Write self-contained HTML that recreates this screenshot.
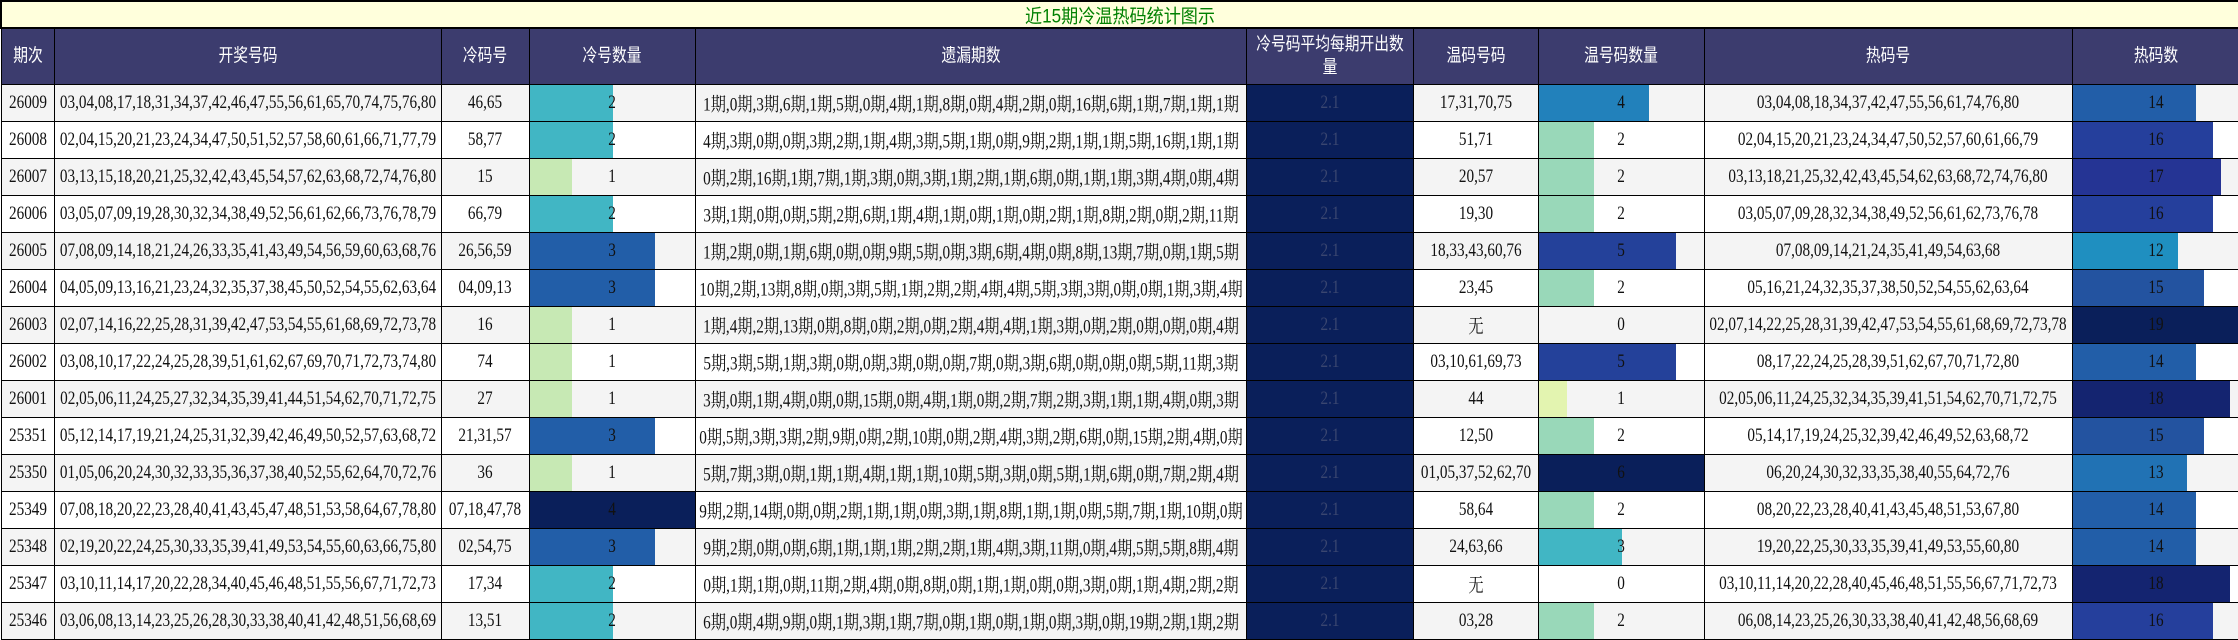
<!DOCTYPE html>
<html><head><meta charset="utf-8"><style>
*{margin:0;padding:0;box-sizing:border-box}
body{width:2238px;height:639px;overflow:hidden;background:#fff;font-family:"Liberation Serif","Noto Serif CJK SC","Noto Sans CJK SC",serif}
table{border-collapse:collapse;table-layout:fixed;width:2238px}
td{border:1px solid #000;position:relative;overflow:hidden;padding:0}
.t{position:absolute;left:50%;top:50%;transform:translate(-50%,-50%) scaleX(.8);white-space:nowrap;font-size:19px;color:#111;z-index:2}
.ttl td{height:27px;background:#ffffdc;border:2px solid #000}
.ttl .t{color:#008000;transform:translate(-50%,-50%) scaleX(.9);font-size:19px;font-family:"Liberation Sans","Noto Sans CJK SC",sans-serif}
.hd td{height:56px;background:#3c3c6e}
.hd .t{color:#fff;font-family:"Liberation Sans","Noto Sans CJK SC",sans-serif;font-size:18px;transform:translate(-50%,-50%) scaleX(.82);text-align:center;line-height:23px}
.r td{height:37px;background:#fff}
.r.o td{background:#f4f4f4}
.b{position:absolute;left:0;top:0;bottom:0;z-index:1}
.r td.av{background:#0a1f5a}
.av .t{color:#3a4670}
</style></head><body>
<table>
<colgroup><col style="width:53px"><col style="width:387px"><col style="width:88px"><col style="width:166px"><col style="width:551px"><col style="width:167px"><col style="width:125px"><col style="width:166px"><col style="width:368px"><col style="width:167px"></colgroup>
<tr class="ttl"><td colspan="10"><span class="t">近15期冷温热码统计图示</span></td></tr>
<tr class="hd"><td><span class="t">期次</span></td><td><span class="t">开奖号码</span></td><td><span class="t">冷码号</span></td><td><span class="t">冷号数量</span></td><td><span class="t">遗漏期数</span></td><td><span class="t">冷号码平均每期开出数<br>量</span></td><td><span class="t">温码号码</span></td><td><span class="t">温号码数量</span></td><td><span class="t">热码号</span></td><td><span class="t">热码数</span></td></tr>

<tr class="r o"><td><span class="t">26009</span></td><td><span class="t">03,04,08,17,18,31,34,37,42,46,47,55,56,61,65,70,74,75,76,80</span></td><td><span class="t">46,65</span></td><td><div class="b" style="width:83px;background:#41b6c4"></div><span class="t">2</span></td><td><span class="t">1期,0期,3期,6期,1期,5期,0期,4期,1期,8期,0期,4期,2期,0期,16期,6期,1期,7期,1期,1期</span></td><td class="av"><span class="t">2.1</span></td><td><span class="t">17,31,70,75</span></td><td><div class="b" style="width:110px;background:#2281bb"></div><span class="t">4</span></td><td><span class="t">03,04,08,18,34,37,42,47,55,56,61,74,76,80</span></td><td><div class="b" style="width:123px;background:#225ea8"></div><span class="t">14</span></td></tr>

<tr class="r"><td><span class="t">26008</span></td><td><span class="t">02,04,15,20,21,23,24,34,47,50,51,52,57,58,60,61,66,71,77,79</span></td><td><span class="t">58,77</span></td><td><div class="b" style="width:83px;background:#41b6c4"></div><span class="t">2</span></td><td><span class="t">4期,3期,0期,0期,3期,2期,1期,4期,3期,5期,1期,0期,9期,2期,1期,1期,5期,16期,1期,1期</span></td><td class="av"><span class="t">2.1</span></td><td><span class="t">51,71</span></td><td><div class="b" style="width:55px;background:#99d8b9"></div><span class="t">2</span></td><td><span class="t">02,04,15,20,21,23,24,34,47,50,52,57,60,61,66,79</span></td><td><div class="b" style="width:140px;background:#253f9c"></div><span class="t">16</span></td></tr>

<tr class="r o"><td><span class="t">26007</span></td><td><span class="t">03,13,15,18,20,21,25,32,42,43,45,54,57,62,63,68,72,74,76,80</span></td><td><span class="t">15</span></td><td><div class="b" style="width:42px;background:#c7e9b4"></div><span class="t">1</span></td><td><span class="t">0期,2期,16期,1期,7期,1期,3期,0期,3期,1期,2期,1期,6期,0期,1期,1期,3期,4期,0期,4期</span></td><td class="av"><span class="t">2.1</span></td><td><span class="t">20,57</span></td><td><div class="b" style="width:55px;background:#99d8b9"></div><span class="t">2</span></td><td><span class="t">03,13,18,21,25,32,42,43,45,54,62,63,68,72,74,76,80</span></td><td><div class="b" style="width:148px;background:#253494"></div><span class="t">17</span></td></tr>

<tr class="r"><td><span class="t">26006</span></td><td><span class="t">03,05,07,09,19,28,30,32,34,38,49,52,56,61,62,66,73,76,78,79</span></td><td><span class="t">66,79</span></td><td><div class="b" style="width:83px;background:#41b6c4"></div><span class="t">2</span></td><td><span class="t">3期,1期,0期,0期,5期,2期,6期,1期,4期,1期,0期,1期,0期,2期,1期,8期,2期,0期,2期,11期</span></td><td class="av"><span class="t">2.1</span></td><td><span class="t">19,30</span></td><td><div class="b" style="width:55px;background:#99d8b9"></div><span class="t">2</span></td><td><span class="t">03,05,07,09,28,32,34,38,49,52,56,61,62,73,76,78</span></td><td><div class="b" style="width:140px;background:#253f9c"></div><span class="t">16</span></td></tr>

<tr class="r o"><td><span class="t">26005</span></td><td><span class="t">07,08,09,14,18,21,24,26,33,35,41,43,49,54,56,59,60,63,68,76</span></td><td><span class="t">26,56,59</span></td><td><div class="b" style="width:125px;background:#225ea8"></div><span class="t">3</span></td><td><span class="t">1期,2期,0期,1期,6期,0期,0期,9期,5期,0期,3期,6期,4期,0期,8期,13期,7期,0期,1期,5期</span></td><td class="av"><span class="t">2.1</span></td><td><span class="t">18,33,43,60,76</span></td><td><div class="b" style="width:137px;background:#24419a"></div><span class="t">5</span></td><td><span class="t">07,08,09,14,21,24,35,41,49,54,63,68</span></td><td><div class="b" style="width:105px;background:#1f8fc0"></div><span class="t">12</span></td></tr>

<tr class="r"><td><span class="t">26004</span></td><td><span class="t">04,05,09,13,16,21,23,24,32,35,37,38,45,50,52,54,55,62,63,64</span></td><td><span class="t">04,09,13</span></td><td><div class="b" style="width:125px;background:#225ea8"></div><span class="t">3</span></td><td><span class="t">10期,2期,13期,8期,0期,3期,5期,1期,2期,2期,4期,4期,5期,3期,3期,0期,0期,1期,3期,4期</span></td><td class="av"><span class="t">2.1</span></td><td><span class="t">23,45</span></td><td><div class="b" style="width:55px;background:#99d8b9"></div><span class="t">2</span></td><td><span class="t">05,16,21,24,32,35,37,38,50,52,54,55,62,63,64</span></td><td><div class="b" style="width:131px;background:#2353a0"></div><span class="t">15</span></td></tr>

<tr class="r o"><td><span class="t">26003</span></td><td><span class="t">02,07,14,16,22,25,28,31,39,42,47,53,54,55,61,68,69,72,73,78</span></td><td><span class="t">16</span></td><td><div class="b" style="width:42px;background:#c7e9b4"></div><span class="t">1</span></td><td><span class="t">1期,4期,2期,13期,0期,8期,0期,2期,0期,2期,4期,4期,1期,3期,0期,2期,0期,0期,0期,4期</span></td><td class="av"><span class="t">2.1</span></td><td><span class="t">无</span></td><td><span class="t">0</span></td><td><span class="t">02,07,14,22,25,28,31,39,42,47,53,54,55,61,68,69,72,73,78</span></td><td><div class="b" style="width:167px;background:#0a1f5a"></div><span class="t">19</span></td></tr>

<tr class="r"><td><span class="t">26002</span></td><td><span class="t">03,08,10,17,22,24,25,28,39,51,61,62,67,69,70,71,72,73,74,80</span></td><td><span class="t">74</span></td><td><div class="b" style="width:42px;background:#c7e9b4"></div><span class="t">1</span></td><td><span class="t">5期,3期,5期,1期,3期,0期,0期,3期,0期,0期,7期,0期,3期,6期,0期,0期,0期,5期,11期,3期</span></td><td class="av"><span class="t">2.1</span></td><td><span class="t">03,10,61,69,73</span></td><td><div class="b" style="width:137px;background:#24419a"></div><span class="t">5</span></td><td><span class="t">08,17,22,24,25,28,39,51,62,67,70,71,72,80</span></td><td><div class="b" style="width:123px;background:#225ea8"></div><span class="t">14</span></td></tr>

<tr class="r o"><td><span class="t">26001</span></td><td><span class="t">02,05,06,11,24,25,27,32,34,35,39,41,44,51,54,62,70,71,72,75</span></td><td><span class="t">27</span></td><td><div class="b" style="width:42px;background:#c7e9b4"></div><span class="t">1</span></td><td><span class="t">3期,0期,1期,4期,0期,0期,15期,0期,4期,1期,0期,2期,7期,2期,3期,1期,1期,4期,0期,3期</span></td><td class="av"><span class="t">2.1</span></td><td><span class="t">44</span></td><td><div class="b" style="width:28px;background:#e3f4b0"></div><span class="t">1</span></td><td><span class="t">02,05,06,11,24,25,32,34,35,39,41,51,54,62,70,71,72,75</span></td><td><div class="b" style="width:157px;background:#142470"></div><span class="t">18</span></td></tr>

<tr class="r"><td><span class="t">25351</span></td><td><span class="t">05,12,14,17,19,21,24,25,31,32,39,42,46,49,50,52,57,63,68,72</span></td><td><span class="t">21,31,57</span></td><td><div class="b" style="width:125px;background:#225ea8"></div><span class="t">3</span></td><td><span class="t">0期,5期,3期,3期,2期,9期,0期,2期,10期,0期,2期,4期,3期,2期,6期,0期,15期,2期,4期,0期</span></td><td class="av"><span class="t">2.1</span></td><td><span class="t">12,50</span></td><td><div class="b" style="width:55px;background:#99d8b9"></div><span class="t">2</span></td><td><span class="t">05,14,17,19,24,25,32,39,42,46,49,52,63,68,72</span></td><td><div class="b" style="width:131px;background:#2353a0"></div><span class="t">15</span></td></tr>

<tr class="r o"><td><span class="t">25350</span></td><td><span class="t">01,05,06,20,24,30,32,33,35,36,37,38,40,52,55,62,64,70,72,76</span></td><td><span class="t">36</span></td><td><div class="b" style="width:42px;background:#c7e9b4"></div><span class="t">1</span></td><td><span class="t">5期,7期,3期,0期,1期,1期,4期,1期,1期,10期,5期,3期,0期,5期,1期,6期,0期,7期,2期,4期</span></td><td class="av"><span class="t">2.1</span></td><td><span class="t">01,05,37,52,62,70</span></td><td><div class="b" style="width:166px;background:#0a1f5a"></div><span class="t">6</span></td><td><span class="t">06,20,24,30,32,33,35,38,40,55,64,72,76</span></td><td><div class="b" style="width:114px;background:#2172b4"></div><span class="t">13</span></td></tr>

<tr class="r"><td><span class="t">25349</span></td><td><span class="t">07,08,18,20,22,23,28,40,41,43,45,47,48,51,53,58,64,67,78,80</span></td><td><span class="t">07,18,47,78</span></td><td><div class="b" style="width:166px;background:#0a1f5a"></div><span class="t">4</span></td><td><span class="t">9期,2期,14期,0期,0期,2期,1期,1期,0期,3期,1期,8期,1期,1期,0期,5期,7期,1期,10期,0期</span></td><td class="av"><span class="t">2.1</span></td><td><span class="t">58,64</span></td><td><div class="b" style="width:55px;background:#99d8b9"></div><span class="t">2</span></td><td><span class="t">08,20,22,23,28,40,41,43,45,48,51,53,67,80</span></td><td><div class="b" style="width:123px;background:#225ea8"></div><span class="t">14</span></td></tr>

<tr class="r o"><td><span class="t">25348</span></td><td><span class="t">02,19,20,22,24,25,30,33,35,39,41,49,53,54,55,60,63,66,75,80</span></td><td><span class="t">02,54,75</span></td><td><div class="b" style="width:125px;background:#225ea8"></div><span class="t">3</span></td><td><span class="t">9期,2期,0期,0期,6期,1期,1期,1期,2期,2期,1期,4期,3期,11期,0期,4期,5期,5期,8期,4期</span></td><td class="av"><span class="t">2.1</span></td><td><span class="t">24,63,66</span></td><td><div class="b" style="width:83px;background:#41b6c4"></div><span class="t">3</span></td><td><span class="t">19,20,22,25,30,33,35,39,41,49,53,55,60,80</span></td><td><div class="b" style="width:123px;background:#225ea8"></div><span class="t">14</span></td></tr>

<tr class="r"><td><span class="t">25347</span></td><td><span class="t">03,10,11,14,17,20,22,28,34,40,45,46,48,51,55,56,67,71,72,73</span></td><td><span class="t">17,34</span></td><td><div class="b" style="width:83px;background:#41b6c4"></div><span class="t">2</span></td><td><span class="t">0期,1期,1期,0期,11期,2期,4期,0期,8期,0期,1期,1期,0期,0期,3期,0期,1期,4期,2期,2期</span></td><td class="av"><span class="t">2.1</span></td><td><span class="t">无</span></td><td><span class="t">0</span></td><td><span class="t">03,10,11,14,20,22,28,40,45,46,48,51,55,56,67,71,72,73</span></td><td><div class="b" style="width:157px;background:#142470"></div><span class="t">18</span></td></tr>

<tr class="r o"><td><span class="t">25346</span></td><td><span class="t">03,06,08,13,14,23,25,26,28,30,33,38,40,41,42,48,51,56,68,69</span></td><td><span class="t">13,51</span></td><td><div class="b" style="width:83px;background:#41b6c4"></div><span class="t">2</span></td><td><span class="t">6期,0期,4期,9期,0期,1期,3期,1期,7期,0期,1期,0期,1期,0期,3期,0期,19期,2期,1期,2期</span></td><td class="av"><span class="t">2.1</span></td><td><span class="t">03,28</span></td><td><div class="b" style="width:55px;background:#99d8b9"></div><span class="t">2</span></td><td><span class="t">06,08,14,23,25,26,30,33,38,40,41,42,48,56,68,69</span></td><td><div class="b" style="width:140px;background:#253f9c"></div><span class="t">16</span></td></tr>
</table>
</body></html>
